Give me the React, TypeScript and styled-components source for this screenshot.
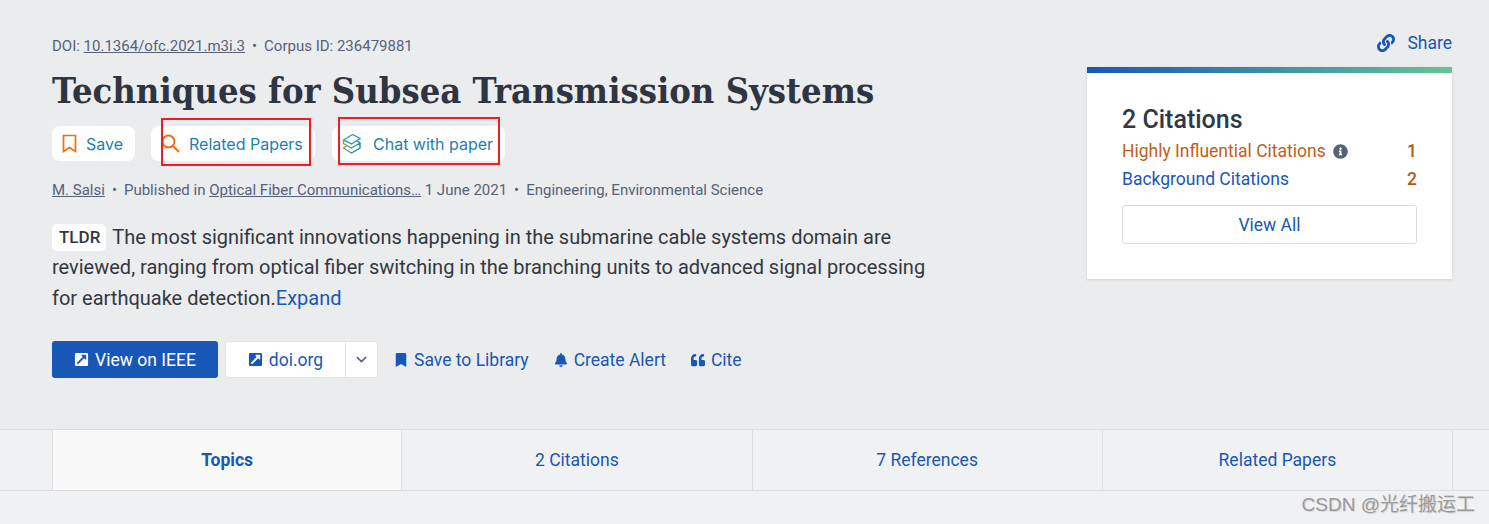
import React, { FC } from 'react';
import styled, { createGlobalStyle } from 'styled-components';
import { FaBell, FaBookmark, FaExternalLinkSquareAlt, FaInfoCircle, FaLink, FaQuoteLeft } from 'react-icons/fa';
import { ChevronDown } from 'lucide-react';

const blue = '#1857b6';
const teal = '#1b81b5';
const slate = '#566178';
const ink = '#2e3440';

const GlobalStyle = createGlobalStyle`
  html, body {
    margin: 0;
    background: #ebecee;
    font-family: Roboto, "Liberation Sans", sans-serif;
  }
`;

const Page = styled.div`
  position: relative;
  width: 1489px;
  height: 524px;
  overflow: hidden;
`;

const Header = styled.section`
  height: 429px;
  box-sizing: border-box;
  padding: 0 37px 0 52px;
  display: flex;
  justify-content: space-between;
`;

const Left = styled.div`
  width: 880px;
  padding-top: 36px;
`;

const Meta = styled.div`
  font-size: 15px;
  line-height: 20px;
  color: ${slate};
  white-space: nowrap;
  a {
    color: ${slate};
    text-decoration: underline;
  }
`;

const Dot = styled.span`
  margin: 0 7px;
`;

const Title = styled.h1`
  margin: 12px 0 14px;
  font-family: "DejaVu Serif", serif;
  font-stretch: condensed;
  font-size: 36px;
  line-height: 44px;
  font-weight: 700;
  color: ${ink};
  white-space: nowrap;
`;

const PillRow = styled.div`
  display: flex;
  margin-bottom: 19px;
`;

const Pill = styled.button<{ $w: number; $ml?: number; $gap?: number }>`
  position: relative;
  display: flex;
  align-items: center;
  width: ${p => p.$w}px;
  height: 35px;
  margin-left: ${p => p.$ml ?? 0}px;
  padding: 0 0 0 10px;
  box-sizing: border-box;
  border: 0;
  border-radius: 8px;
  background: #fff;
  color: ${teal};
  font-family: Inter, sans-serif;
  font-size: 16px;
  font-weight: 400;
  white-space: nowrap;
  svg {
    flex: none;
    margin-right: ${p => p.$gap ?? 9}px;
  }
`;

const RedBox = styled.span<{ $l: number; $t: number; $w: number; $h: number }>`
  position: absolute;
  left: ${p => p.$l}px;
  top: ${p => p.$t}px;
  width: ${p => p.$w}px;
  height: ${p => p.$h}px;
  box-sizing: border-box;
  border: 2px solid #ee1c25;
`;

const Tldr = styled.p`
  margin: 22px 0 28px;
  font-size: 20px;
  line-height: 30.4px;
  color: #33383f;
  a {
    color: ${blue};
  }
`;

const TldrBadge = styled.span`
  display: inline-block;
  margin-right: 6px;
  padding: 0 6px 0 7px;
  background: #fff;
  border-radius: 5px;
  font-size: 17px;
  font-weight: 500;
  line-height: 27px;
  vertical-align: 1px;
`;

const Actions = styled.div`
  display: flex;
  align-items: center;
  height: 37px;
  font-size: 17.5px;
`;

const Primary = styled.a`
  display: flex;
  align-items: center;
  justify-content: center;
  gap: 6px;
  width: 166px;
  height: 37px;
  background: ${blue};
  color: #fff;
  border-radius: 3px;
  svg {
    font-size: 15px;
  }
`;

const DoiButton = styled.a`
  display: flex;
  align-items: center;
  justify-content: center;
  gap: 6px;
  width: 121px;
  height: 37px;
  margin-left: 7px;
  box-sizing: border-box;
  background: #fff;
  color: ${blue};
  border: 1px solid #e2e4e8;
  border-radius: 3px 0 0 3px;
  svg {
    font-size: 15px;
  }
`;

const Caret = styled.span`
  display: flex;
  align-items: center;
  justify-content: center;
  width: 32px;
  height: 37px;
  box-sizing: border-box;
  background: #fff;
  border: 1px solid #e2e4e8;
  border-left: 0;
  border-radius: 0 3px 3px 0;
  color: ${slate};
`;

const ActionLink = styled.a<{ $ml: number }>`
  display: flex;
  align-items: center;
  gap: 6px;
  margin-left: ${p => p.$ml}px;
  color: ${blue};
  svg {
    font-size: 14px;
  }
`;

const Right = styled.aside`
  width: 365px;
  padding-top: 31px;
`;

const Share = styled.a`
  display: flex;
  justify-content: flex-end;
  align-items: center;
  gap: 12px;
  height: 24px;
  margin-bottom: 12px;
  font-size: 17.5px;
  color: ${blue};
`;

const Card = styled.div`
  box-sizing: border-box;
  height: 212px;
  padding: 33px 35px 0;
  background: #fff;
  border-top: 6px solid;
  border-image: linear-gradient(90deg, #1857b6, #65c596) 1;
  box-shadow: 0 1px 3px rgba(0, 0, 0, 0.12);
`;

const CardTitle = styled.h2`
  margin: 0 0 3px;
  font-size: 25px;
  line-height: 28px;
  font-weight: 500;
  color: #2e3a46;
`;

const StatRow = styled.div<{ $tone: string }>`
  display: flex;
  justify-content: space-between;
  align-items: center;
  height: 28px;
  font-size: 17.5px;
  color: ${p => p.$tone};
`;

const StatLabel = styled.span`
  display: flex;
  align-items: center;
  gap: 7px;
  svg {
    font-size: 15px;
    color: ${slate};
  }
`;

const StatCount = styled.span`
  font-weight: 500;
  color: #b9580f;
`;

const ViewAll = styled.button`
  display: block;
  width: 100%;
  height: 39px;
  margin-top: 12px;
  background: #fff;
  border: 1px solid #d9dbdf;
  border-radius: 3px;
  font-family: inherit;
  font-size: 17.5px;
  color: ${blue};
`;

const Tabs = styled.nav`
  box-sizing: border-box;
  height: 62px;
  padding-left: 52px;
  display: flex;
  background: #f0f1f3;
  border-top: 1px solid #dcdee1;
  border-bottom: 1px solid #dcdee1;
`;

const Tab = styled.a<{ $active?: boolean }>`
  box-sizing: border-box;
  width: 350.25px;
  display: flex;
  align-items: center;
  justify-content: center;
  padding-bottom: 1px;
  font-size: 17.5px;
  font-weight: ${p => (p.$active ? 700 : 400)};
  color: ${blue};
  background: ${p => (p.$active ? '#f8f8f8' : 'transparent')};
  border-right: 1px solid #dcdee1;
  &:first-child {
    border-left: 1px solid #dcdee1;
  }
`;

const Footer = styled.div`
  height: 33px;
  background: #f0f1f3;
`;

const Watermark = styled.span`
  position: absolute;
  right: 14px;
  bottom: 6px;
  font-family: "Liberation Sans", "Noto Sans CJK SC", sans-serif;
  font-size: 19px;
  line-height: 26px;
  color: #9a9a9a;
  text-shadow: 1px 1px 1px rgba(0, 0, 0, 0.12);
`;

const SaveIcon = () => (
  <svg width="15" height="20" viewBox="0 0 15 20" fill="none" stroke="#f26b0f" strokeWidth="1.7">
    <path d="M1.5 1.5h12v16l-6-4-6 4z" />
  </svg>
);

const SearchIcon = () => (
  <svg width="19" height="19" viewBox="0 0 19 19" fill="none" stroke="#f26b0f" strokeWidth="1.8">
    <circle cx="7.5" cy="7.5" r="6" />
    <path d="M12 12l6 6" />
  </svg>
);

const ChatIcon = () => (
  <svg width="20" height="21" viewBox="0 0 20 21" fill="none" strokeWidth="1.4">
    <defs>
      <linearGradient id="chatTop" x1="0" y1="0" x2="1" y2="0">
        <stop offset="0" stopColor="#2ba6a0" />
        <stop offset="1" stopColor="#2196b8" />
      </linearGradient>
      <linearGradient id="chatLow" x1="0" y1="0" x2="1" y2="0.4">
        <stop offset="0" stopColor="#ee7a22" />
        <stop offset="0.45" stopColor="#5fa87c" />
        <stop offset="1" stopColor="#1f8a8f" />
      </linearGradient>
    </defs>
    <path stroke="url(#chatTop)" d="M1.5 7L10.500 1.500 18 5.500 9.500 11z" />
    <path stroke="url(#chatLow)" d="M1.500 7v3.500l8 4.500 8.500-5-3-2.500M5 12.500L1.500 15 9.500 20 18 15v-4.500" />
  </svg>
);

const App: FC = () => (
  <Page>
    <GlobalStyle />
    <Header>
      <Left>
        <Meta>
          DOI: <a>10.1364/ofc.2021.m3i.3</a>
          <Dot>•</Dot>Corpus ID: 236479881
        </Meta>
        <Title>Techniques for Subsea Transmission Systems</Title>
        <PillRow>
          <Pill $w={83}>
            <SaveIcon />
            Save
          </Pill>
          <Pill $w={164} $ml={16}>
            <SearchIcon />
            Related Papers
            <RedBox $l={10} $t={-8} $w={150} $h={48} />
          </Pill>
          <Pill $w={173} $ml={17} $gap={11}>
            <ChatIcon />
            Chat with paper
            <RedBox $l={6} $t={-9} $w={162} $h={48} />
          </Pill>
        </PillRow>
        <Meta>
          <a>M. Salsi</a>
          <Dot>•</Dot>Published in <a>Optical Fiber Communications…</a> 1 June 2021
          <Dot>•</Dot>Engineering, Environmental Science
        </Meta>
        <Tldr>
          <TldrBadge>TLDR</TldrBadge>The most significant innovations happening in the submarine cable systems domain are
          reviewed, ranging from optical fiber switching in the branching units to advanced signal processing for
          earthquake detection.<a>Expand</a>
        </Tldr>
        <Actions>
          <Primary>
            <FaExternalLinkSquareAlt />
            View on IEEE
          </Primary>
          <DoiButton>
            <FaExternalLinkSquareAlt />
            doi.org
          </DoiButton>
          <Caret>
            <ChevronDown size={17} />
          </Caret>
          <ActionLink $ml={16}>
            <FaBookmark />
            Save to Library
          </ActionLink>
          <ActionLink $ml={25}>
            <FaBell />
            Create Alert
          </ActionLink>
          <ActionLink $ml={25}>
            <FaQuoteLeft />
            Cite
          </ActionLink>
        </Actions>
      </Left>
      <Right>
        <Share>
          <FaLink size={18} />
          Share
        </Share>
        <Card>
          <CardTitle>2 Citations</CardTitle>
          <StatRow $tone="#c0601a">
            <StatLabel>
              Highly Influential Citations <FaInfoCircle />
            </StatLabel>
            <StatCount>1</StatCount>
          </StatRow>
          <StatRow $tone={blue}>
            <StatLabel>Background Citations</StatLabel>
            <StatCount>2</StatCount>
          </StatRow>
          <ViewAll>View All</ViewAll>
        </Card>
      </Right>
    </Header>
    <Tabs>
      <Tab $active>Topics</Tab>
      <Tab>2 Citations</Tab>
      <Tab>7 References</Tab>
      <Tab>Related Papers</Tab>
    </Tabs>
    <Footer />
    <Watermark>CSDN @光纤搬运工</Watermark>
  </Page>
);

export default App;
